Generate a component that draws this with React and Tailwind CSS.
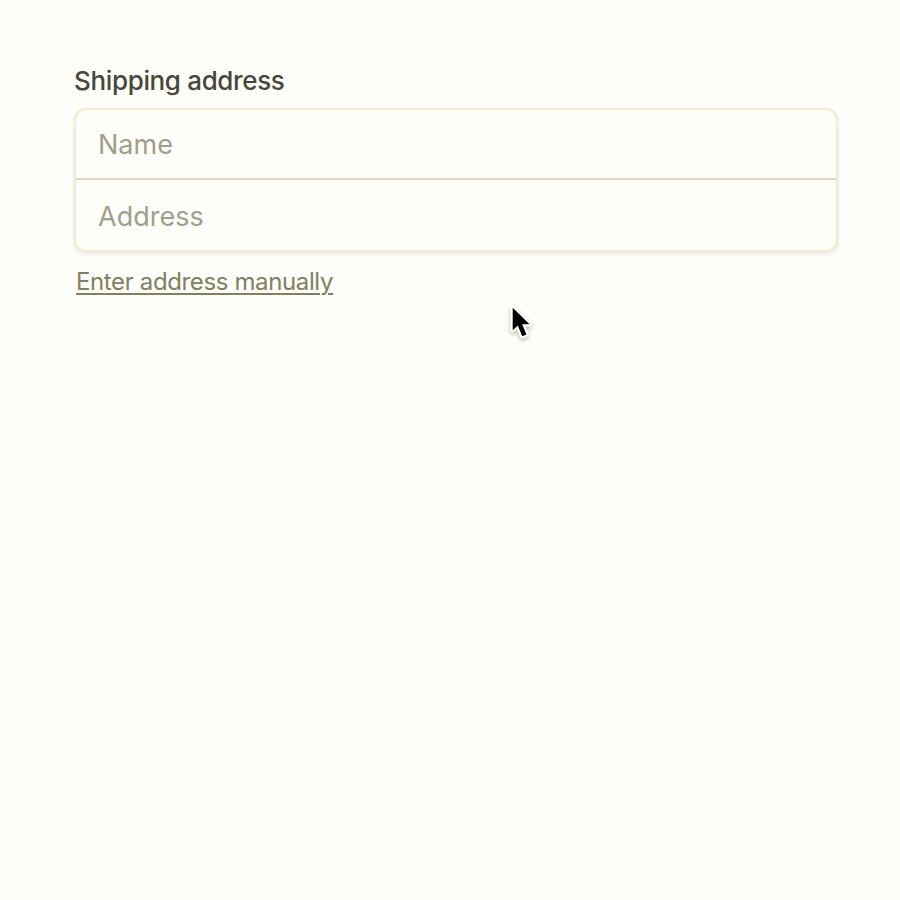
export default function App() {
  return (
    <main className="relative h-[900px] w-[900px] overflow-hidden bg-[#fdfdfa] pt-[64px] pr-[62px] pl-[74px] font-['Inter',sans-serif]">
      <h1 className="h-[34px] text-[26px] leading-[34px] font-medium tracking-[-0.35px] whitespace-nowrap text-[#47473a]">
        Shipping address
      </h1>
      <form className="mt-[10px] h-[144px] overflow-hidden rounded-[12px] border-2 border-[#eeeed2] bg-[#fdfdfa] shadow-[0_2px_3px_1px_rgba(90,90,20,0.08)]">
        <input
          aria-label="Name"
          placeholder="Name"
          className="block h-[70px] w-full border-b-2 border-[#dcdcc6] px-[22px] text-[27px] outline-none placeholder:text-[#9f9f8b]"
        />
        <input
          aria-label="Address"
          placeholder="Address"
          className="block h-[72px] w-full px-[22px] text-[27px] outline-none placeholder:text-[#9f9f8b]"
        />
      </form>
      <a className="mt-[15px] ml-[2px] block w-fit text-[24px] leading-[30px] tracking-[-0.37px] whitespace-nowrap text-[#80805f] underline decoration-2 underline-offset-[3px]">
        Enter address manually
      </a>
      <svg
        className="absolute top-[302px] left-[506px] drop-shadow-[0_2px_2px_rgba(70,70,40,0.35)]"
        width="32"
        height="44"
        viewBox="0 0 32 44"
      >
        <path
          d="M6.7 5.8V28.2L11.8 23.6L16.2 34.2L20.4 32.4L16.2 22.3H23.6Z"
          fill="#000"
          stroke="#fff"
          strokeWidth="4.5"
          strokeLinejoin="round"
          paintOrder="stroke"
        />
      </svg>
    </main>
  );
}
